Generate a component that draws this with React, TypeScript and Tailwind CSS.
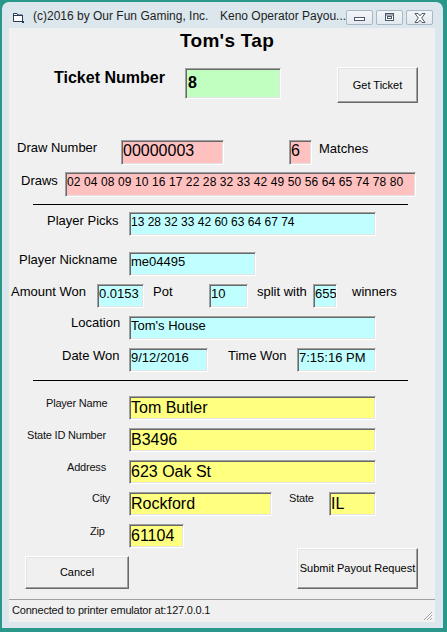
import React from "react";

const sunk =
  "shrink-0 box-border border border-t-[#a0a0a0] border-l-[#a0a0a0] border-r-white border-b-white shadow-[inset_1px_1px_0_#696969,inset_-1px_-1px_0_#e3e3e3] overflow-hidden whitespace-nowrap pl-[1px]";
const raised =
  "shrink-0 box-border border border-t-white border-l-white border-r-[#696969] border-b-[#696969] shadow-[inset_-1px_-1px_0_#a0a0a0,inset_1px_1px_0_#e3e3e3] bg-[#f0f0f0] flex items-center justify-center text-[11px] text-black";
const lbl13 = "shrink-0 text-[13px] leading-[16px] whitespace-nowrap";
const lbl11 = "shrink-0 text-[11px] leading-[13px] tracking-[-0.2px] whitespace-nowrap text-[#111]";
const cyanTxt = "text-[13px] leading-[16px] pt-[1px]";
const yelTxt = "text-[16px] leading-[18px] pt-[2px]";

function CapBtn({ children }: { children: React.ReactNode }) {
  return (
    <div className="w-[27px] h-[15px] rounded-[2px] border border-[#a9b8c4] bg-[linear-gradient(#f3f6f8,#e2e9ee)] flex items-center justify-center">
      {children}
    </div>
  );
}

export default function App() {
  return (
    <div className="w-[447px] h-[632px] bg-[#2a978b] overflow-hidden font-['Liberation_Sans',Arial,sans-serif] text-black">
      <div className="ml-[2px] mt-[2px] w-[441px] h-[626px] rounded-t-[7px] bg-[#dbe7ed] flex flex-col">
        {/* title bar */}
        <div className="h-[26px] flex items-start">
          <svg className="ml-[10px] mt-[10px] shrink-0" width="12" height="11" viewBox="0 0 12 11">
            <path d="M1.5 1.5 H5 L6 3 H10.5 V9.5 H1.5 Z" fill="#fff" stroke="#2b3a55" strokeWidth="1" />
            <path d="M1.5 3.5 H10.5" stroke="#2b3a55" strokeWidth="1" />
            <rect x="10" y="9" width="2" height="2" fill="#2b3a55" />
          </svg>
          <div className="ml-[9px] mt-[7px] text-[12px] leading-[14px] text-[#1e1e1e] whitespace-nowrap flex">
            <span className="w-[187px] shrink-0">(c)2016 by Our Fun Gaming, Inc.</span>
            <span>Keno Operator Payou...</span>
          </div>
          <div className="ml-auto mr-[11px] mt-[8px] flex gap-[3px]">
            <CapBtn>
              <svg width="11" height="8" viewBox="0 0 11 8">
                <rect x="0.5" y="3.5" width="10" height="3" fill="#fff" stroke="#4b5968" />
              </svg>
            </CapBtn>
            <CapBtn>
              <svg width="11" height="9" viewBox="0 0 11 9">
                <rect x="1.5" y="0.5" width="8" height="7" fill="#fff" stroke="#4b5968" />
                <rect x="1.5" y="1.5" width="8" height="1" fill="#4b5968" />
                <rect x="3.5" y="3.5" width="4" height="2" fill="none" stroke="#4b5968" />
              </svg>
            </CapBtn>
            <CapBtn>
              <svg width="14" height="10" viewBox="0 0 14 10">
                <path
                  d="M2 0.5 H5 L7 2.8 L9 0.5 H12 L8.7 5 L12 9.5 H9 L7 7.2 L5 9.5 H2 L5.3 5 Z"
                  fill="#fff"
                  stroke="#4b5968"
                  strokeWidth="1"
                  strokeLinejoin="round"
                />
              </svg>
            </CapBtn>
          </div>
        </div>

        {/* client area */}
        <div className="ml-[7px] w-[426px] h-[594px] bg-[#f0f0f0] flex flex-col">
          {/* title */}
          <div className="mt-[3px] h-[20px] pl-[171px] text-[19px] leading-[20px] font-bold whitespace-nowrap tracking-[0.3px]">
            Tom's Tap
          </div>

          {/* ticket */}
          <div className="mt-[16px] h-[36px] flex items-start">
            <div className="ml-[45px] mt-[2px] w-[131px] shrink-0 text-[16px] leading-[18px] font-bold whitespace-nowrap">
              Ticket Number
            </div>
            <div className={`${sunk} mt-[1px] w-[96px] h-[31px] bg-[#c0ffc0]`}>
              <div className="pt-[5px] pl-[1px] text-[16px] leading-[18px] font-bold">8</div>
            </div>
            <div className={`${raised} ml-[56px] w-[81px] h-[36px]`}>Get Ticket</div>
          </div>

          {/* draw number */}
          <div className="mt-[37px] h-[25px] flex items-start">
            <div className={`${lbl13} ml-[8px] w-[104px]`}>Draw Number</div>
            <div className={`${sunk} w-[103px] h-[25px] bg-[#ffc0c0]`}>
              <div className="pt-[1px] text-[16px] leading-[18px]">00000003</div>
            </div>
            <div className={`${sunk} ml-[65px] w-[23px] h-[25px] bg-[#ffc0c0]`}>
              <div className="pt-[1px] text-[16px] leading-[18px]">6</div>
            </div>
            <div className={`${lbl13} ml-[7px] mt-[1px]`}>Matches</div>
          </div>

          {/* draws */}
          <div className="mt-[7px] h-[25px] flex items-start">
            <div className={`${lbl13} ml-[12px] mt-[1px] w-[44px]`}>Draws</div>
            <div className={`${sunk} w-[351px] h-[25px] bg-[#ffc0c0]`}>
              <div className="pt-[2px] text-[12px] leading-[14px] tracking-[0.1px]">
                02 04 08 09 10 16 17 22 28 32 33 42 49 50 56 64 65 74 78 80
              </div>
            </div>
          </div>

          <div className="mt-[7px] ml-[24px] w-[375px] h-[1px] bg-black shrink-0" />

          {/* player picks */}
          <div className="mt-[7px] h-[24px] flex items-start">
            <div className={`${lbl13} ml-[38px] mt-[1px] w-[82px]`}>Player Picks</div>
            <div className={`${sunk} w-[247px] h-[24px] bg-[#c0ffff]`}>
              <div className="pt-[2px] text-[12px] leading-[14px]">13 28 32 33 42 60 63 64 67 74</div>
            </div>
          </div>

          {/* nickname */}
          <div className="mt-[16px] h-[24px] flex items-start">
            <div className={`${lbl13} ml-[10px] w-[110px]`}>Player Nickname</div>
            <div className={`${sunk} w-[127px] h-[24px] bg-[#c0ffff]`}>
              <div className={cyanTxt}>me04495</div>
            </div>
          </div>

          {/* amount */}
          <div className="mt-[8px] h-[24px] flex items-start">
            <div className={`${lbl13} ml-[2px] w-[86px]`}>Amount Won</div>
            <div className={`${sunk} w-[47px] h-[24px] bg-[#c0ffff]`}>
              <div className={cyanTxt}>0.0153</div>
            </div>
            <div className={`${lbl13} ml-[9px] w-[56px]`}>Pot</div>
            <div className={`${sunk} w-[39px] h-[24px] bg-[#c0ffff]`}>
              <div className={cyanTxt}>10</div>
            </div>
            <div className={`${lbl13} ml-[9px] w-[56px]`}>split with</div>
            <div className={`${sunk} w-[24px] h-[24px] bg-[#c0ffff]`}>
              <div className={cyanTxt}>655</div>
            </div>
            <div className={`${lbl13} ml-[15px]`}>winners</div>
          </div>

          {/* location */}
          <div className="mt-[7px] h-[25px] flex items-start">
            <div className={`${lbl13} ml-[62px] w-[58px]`}>Location</div>
            <div className={`${sunk} mt-[1px] w-[247px] h-[24px] bg-[#c0ffff]`}>
              <div className={cyanTxt}>Tom's House</div>
            </div>
          </div>

          {/* date */}
          <div className="mt-[8px] h-[24px] flex items-start">
            <div className={`${lbl13} ml-[53px] w-[67px]`}>Date Won</div>
            <div className={`${sunk} w-[79px] h-[24px] bg-[#c0ffff]`}>
              <div className={cyanTxt}>9/12/2016</div>
            </div>
            <div className={`${lbl13} ml-[20px] w-[69px]`}>Time Won</div>
            <div className={`${sunk} w-[79px] h-[24px] bg-[#c0ffff]`}>
              <div className={cyanTxt}>7:15:16 PM</div>
            </div>
          </div>

          <div className="mt-[8px] ml-[24px] w-[375px] h-[1px] bg-black shrink-0" />

          {/* player name */}
          <div className="mt-[15px] h-[24px] flex items-start">
            <div className={`${lbl11} ml-[37px] mt-[1px] w-[83px]`}>Player Name</div>
            <div className={`${sunk} w-[247px] h-[24px] bg-[#ffff80]`}>
              <div className={yelTxt}>Tom Butler</div>
            </div>
          </div>

          <div className="mt-[8px] h-[24px] flex items-start">
            <div className={`${lbl11} ml-[18px] mt-[1px] w-[102px]`}>State ID Number</div>
            <div className={`${sunk} w-[247px] h-[24px] bg-[#ffff80]`}>
              <div className={yelTxt}>B3496</div>
            </div>
          </div>

          <div className="mt-[8px] h-[24px] flex items-start">
            <div className={`${lbl11} ml-[58px] mt-[1px] w-[62px]`}>Address</div>
            <div className={`${sunk} w-[247px] h-[24px] bg-[#ffff80]`}>
              <div className={yelTxt}>623 Oak St</div>
            </div>
          </div>

          <div className="mt-[8px] h-[24px] flex items-start">
            <div className={`${lbl11} ml-[83px] w-[37px]`}>City</div>
            <div className={`${sunk} w-[143px] h-[24px] bg-[#ffff80]`}>
              <div className={yelTxt}>Rockford</div>
            </div>
            <div className={`${lbl11} ml-[17px] w-[40px]`}>State</div>
            <div className={`${sunk} w-[47px] h-[24px] bg-[#ffff80]`}>
              <div className={yelTxt}>IL</div>
            </div>
          </div>

          <div className="mt-[8px] h-[24px] flex items-start">
            <div className={`${lbl11} ml-[81px] mt-[1px] w-[39px]`}>Zip</div>
            <div className={`${sunk} w-[55px] h-[24px] bg-[#ffff80]`}>
              <div className={yelTxt}>61104</div>
            </div>
          </div>

          {/* buttons */}
          <div className="h-[41px] flex items-start">
            <div className={`${raised} ml-[16px] mt-[8px] w-[104px] h-[33px]`}>Cancel</div>
            <div className={`${raised} ml-[168px] w-[121px] h-[41px] text-[11.5px]`}>Submit Payout Request</div>
          </div>

          {/* status bar */}
          <div className="relative mt-[10px] h-[23px] border-t border-[#a0a0a0] bg-[#f0f0f0]">
            <div className={`${lbl11} pl-[3px] pt-[4px]`}>Connected to printer emulator at:127.0.0.1</div>
            <svg className="absolute right-[2px] bottom-[1px]" width="11" height="11" viewBox="0 0 11 11">
              <path d="M10 2 L2 10 M10 5 L5 10 M10 8 L8 10" stroke="#a0a0a0" strokeWidth="1" />
              <path d="M10.8 2.8 L2.8 10.8 M10.8 5.8 L5.8 10.8 M10.8 8.8 L8.8 10.8" stroke="#fff" strokeWidth="1" />
            </svg>
          </div>
        </div>
      </div>
    </div>
  );
}
